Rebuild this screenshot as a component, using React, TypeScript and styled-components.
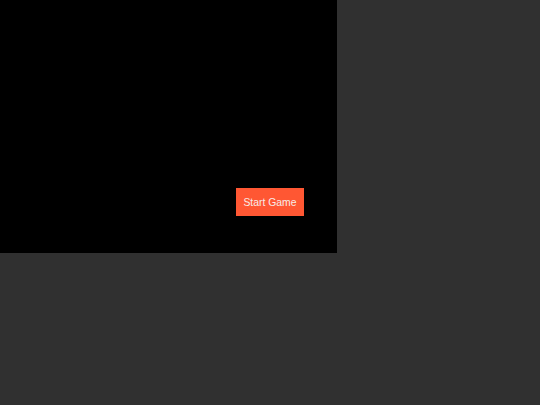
import React from 'react';
import styled, { createGlobalStyle } from 'styled-components';

const GlobalStyle = createGlobalStyle`
  html, body {
    margin: 0;
    padding: 0;
    background: #303030;
    font-family: "Liberation Sans", Arial, sans-serif;
  }
`;

const Stage = styled.div`
  position: relative;
  width: 337px;
  height: 253px;
  background: #000;
`;

const StartButton = styled.button`
  position: absolute;
  left: 236px;
  top: 188px;
  width: 68px;
  height: 28px;
  padding: 0;
  border: none;
  background: #ff5733;
  color: #f8ebe7;
  font-family: "Liberation Sans", Arial, sans-serif;
  font-size: 10.4px;
  cursor: pointer;
`;

const App: React.FC = () => (
  <>
    <GlobalStyle />
    <Stage>
      <StartButton>Start Game</StartButton>
    </Stage>
  </>
);

export default App;
